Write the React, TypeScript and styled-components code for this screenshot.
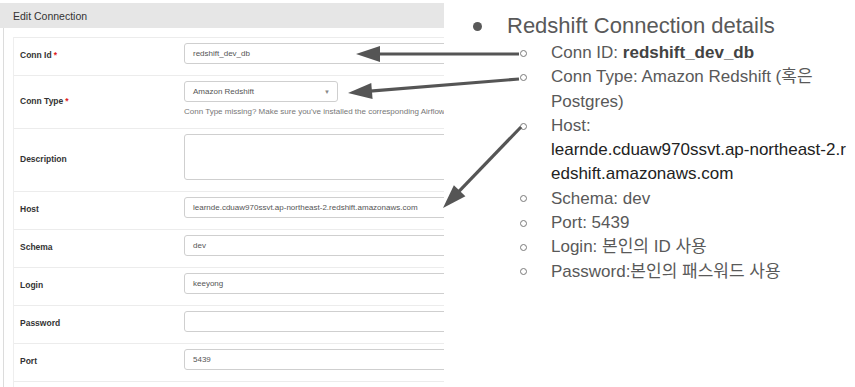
import React from "react";
import styled, { createGlobalStyle } from "styled-components";

const GlobalStyle = createGlobalStyle`
  html, body {
    margin: 0;
    padding: 0;
    background: #ffffff;
  }
  body {
    font-family: "Liberation Sans", Arial, sans-serif;
  }
`;

const Page = styled.div`
  position: relative;
  width: 855px;
  height: 387px;
  display: flex;
  overflow: hidden;
  background: #fff;
`;

/* ---------- left: the airflow form screenshot ---------- */

const Shot = styled.div`
  width: 444px;
  height: 387px;
  flex-shrink: 0;
  overflow: hidden;
  display: flex;
  flex-direction: column;
  padding-top: 3px;
  box-sizing: border-box;
`;

const ShotHeader = styled.div`
  height: 25px;
  flex-shrink: 0;
  background: #e6e6e6;
  color: #333;
  font-size: 10.5px;
  display: flex;
  align-items: center;
  padding-left: 13px;
`;

const ShotBody = styled.div`
  flex: 1;
  margin-left: 3px;
  border-left: 1px solid #dcdcdc;
  padding: 9px 0 0 9px;
`;

const FormTable = styled.div`
  width: 640px;
  border-left: 1px solid #eeeeee;
`;

const Row = styled.div`
  display: grid;
  grid-template-columns: 170px 1fr;
  border-top: 1px solid #ececec;
  padding: 5px 0 11px;
  min-height: 21px;
`;

const Label = styled.div`
  align-self: center;
  padding-left: 6px;
  padding-top: 3px;
  font-size: 8.5px;
  font-weight: bold;
  color: #333;
`;

const Req = styled.span`
  color: #e02020;
  margin-left: 2px;
`;

const Field = styled.div`
  display: flex;
  flex-direction: column;
  gap: 5px;
`;

const Input = styled.div<{ $width?: number; $height?: number }>`
  box-sizing: border-box;
  width: ${(p) => (p.$width ? `${p.$width}px` : "100%")};
  height: ${(p) => p.$height ?? 21}px;
  border: 1px solid #cfcfcf;
  border-radius: 3px;
  padding-left: 8px;
  display: flex;
  align-items: center;
  justify-content: space-between;
  font-size: 8px;
  color: #555;
  background: #fff;
`;

const Caret = styled.span`
  font-size: 6px;
  color: #888;
  margin-right: 7px;
`;

const Help = styled.div`
  font-size: 8px;
  color: #777;
  line-height: 10px;
  white-space: nowrap;
`;

/* ---------- right: slide notes ---------- */

const Notes = styled.div`
  flex: 1;
  padding: 12px 0 0 29px;
  font-family: "Liberation Sans", Arial, "Noto Sans CJK KR", sans-serif;
  color: #595959;
`;

const Title = styled.div`
  display: flex;
  align-items: center;
  height: 28px;
  font-size: 22px;
`;

const Dot = styled.span`
  width: 9px;
  height: 9px;
  border-radius: 50%;
  background: #595959;
  margin-right: 25px;
  flex-shrink: 0;
`;

const List = styled.ul`
  list-style: none;
  margin: 1px 0 0 46px;
  padding: 0;
`;

const Item = styled.li`
  display: flex;
  font-size: 17px;
  line-height: 24.3px;
`;

const RingBox = styled.span`
  width: 32px;
  height: 24.3px;
  flex-shrink: 0;
  display: flex;
  align-items: center;
`;

const Ring = styled.span`
  box-sizing: border-box;
  width: 7px;
  height: 7px;
  margin-left: 1px;
  border: 1px solid #7a7a7a;
  border-radius: 50%;
`;

const Strong = styled.b`
  color: #434343;
`;

const HostValue = styled.span`
  color: #222;
`;

const Overlay = styled.svg`
  position: absolute;
  left: 0;
  top: 0;
  pointer-events: none;
`;

const fields = [
  { label: "Host", value: "learnde.cduaw970ssvt.ap-northeast-2.redshift.amazonaws.com" },
  { label: "Schema", value: "dev" },
  { label: "Login", value: "keeyong" },
  { label: "Password", value: "" },
  { label: "Port", value: "5439" },
];

function Arrow({ x1, y1, x2, y2 }: { x1: number; y1: number; x2: number; y2: number }) {
  const dx = x2 - x1;
  const dy = y2 - y1;
  const len = Math.hypot(dx, dy);
  const ux = dx / len;
  const uy = dy / len;
  const head = 24;
  const half = 8;
  const bx = x2 - ux * head;
  const by = y2 - uy * head;
  const px = -uy;
  const py = ux;
  const pts = `${x2},${y2} ${bx + px * half},${by + py * half} ${bx - px * half},${by - py * half}`;
  return (
    <g>
      <line x1={x1} y1={y1} x2={bx + ux * 2} y2={by + uy * 2} stroke="#555" strokeWidth={3.2} />
      <polygon points={pts} fill="#555" />
    </g>
  );
}

function Bullet({ children }: { children: React.ReactNode }) {
  return (
    <Item>
      <RingBox>
        <Ring />
      </RingBox>
      <span>{children}</span>
    </Item>
  );
}

export default function App() {
  return (
    <>
      <GlobalStyle />
      <Page>
        <Shot>
          <ShotHeader>Edit Connection</ShotHeader>
          <ShotBody>
            <FormTable>
              <Row>
                <Label>
                  Conn Id<Req>*</Req>
                </Label>
                <Input>redshift_dev_db</Input>
              </Row>
              <Row>
                <Label>
                  Conn Type<Req>*</Req>
                </Label>
                <Field>
                  <Input $width={154}>
                    Amazon Redshift<Caret>▼</Caret>
                  </Input>
                  <Help>
                    Conn Type missing? Make sure you've installed the corresponding Airflow Provider Package.
                  </Help>
                </Field>
              </Row>
              <Row>
                <Label>Description</Label>
                <Input $height={46} />
              </Row>
              {fields.map((f) => (
                <Row key={f.label}>
                  <Label>{f.label}</Label>
                  <Input>{f.value}</Input>
                </Row>
              ))}
              <Row />
            </FormTable>
          </ShotBody>
        </Shot>

        <Notes>
          <Title>
            <Dot />
            Redshift Connection details
          </Title>
          <List>
            <Bullet>
              Conn ID: <Strong>redshift_dev_db</Strong>
            </Bullet>
            <Bullet>
              Conn Type: Amazon Redshift (혹은
              <br />
              Postgres)
            </Bullet>
            <Bullet>
              Host:
              <br />
              <HostValue>
                learnde.cduaw970ssvt.ap-northeast-2.r
                <br />
                edshift.amazonaws.com
              </HostValue>
            </Bullet>
            <Bullet>Schema: dev</Bullet>
            <Bullet>Port: 5439</Bullet>
            <Bullet>Login: 본인의 ID 사용</Bullet>
            <Bullet>Password:본인의 패스워드 사용</Bullet>
          </List>
        </Notes>

        <Overlay width={855} height={387} viewBox="0 0 855 387">
          <Arrow x1={519} y1={54} x2={356} y2={54} />
          <Arrow x1={519} y1={79} x2={348} y2={93} />
          <Arrow x1={521} y1={127} x2={443} y2={208} />
        </Overlay>
      </Page>
    </>
  );
}
